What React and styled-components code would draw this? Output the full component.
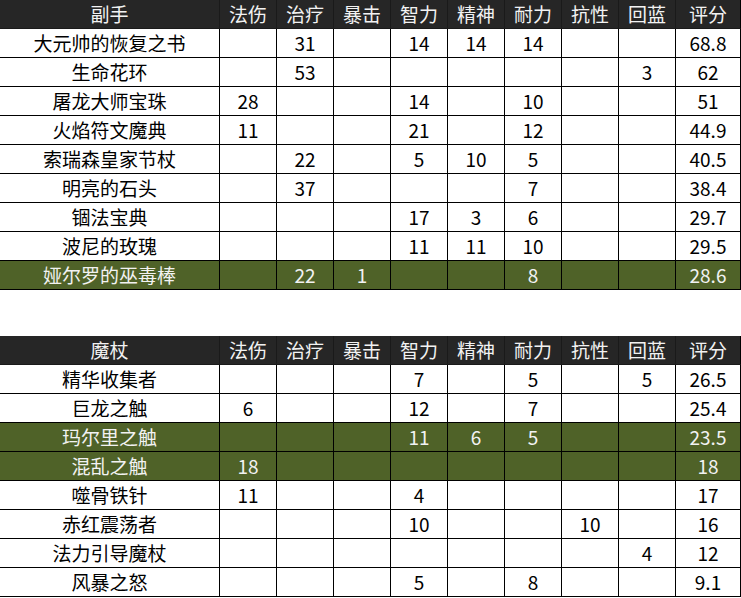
import React from "react";
import styled, { createGlobalStyle } from "styled-components";

const Global = createGlobalStyle`
  html, body { margin: 0; padding: 0; background: #ffffff; }
  body { font-family: "Noto Sans CJK SC", "Noto Sans", sans-serif; }
`;

const Page = styled.div`
  width: 741px;
  display: flex;
  flex-direction: column;
  gap: 46px;
`;

const Grid = styled.div`
  display: grid;
  grid-template-columns: 220px repeat(8, 57px) 65px;
  grid-auto-rows: 29px;
`;

const Cell = styled.div`
  box-sizing: border-box;
  border-right: 1px solid #000;
  border-bottom: 1px solid #000;
  display: flex;
  align-items: center;
  justify-content: center;
  font-size: 19px;
  line-height: 28px;
  white-space: nowrap;
  overflow: hidden;
  color: ${(p) => (p.$variant === "head" || p.$variant === "hl" ? "#f2f2f2" : "#000")};
  background: ${(p) =>
    p.$variant === "head" ? "#262626" : p.$variant === "hl" ? "#4f6228" : "#ffffff"};
  ${(p) => (p.$variant === "head" ? "border-color: #1a1a1a;" : "")}
  ${(p) => (p.$last && p.$variant === "head" ? "border-right-color: #000;" : "")}
`;

const cols = ["法伤", "治疗", "暴击", "智力", "精神", "耐力", "抗性", "回蓝", "评分"];

const offhand = [
  ["大元帅的恢复之书", "", "31", "", "14", "14", "14", "", "", "68.8"],
  ["生命花环", "", "53", "", "", "", "", "", "3", "62"],
  ["屠龙大师宝珠", "28", "", "", "14", "", "10", "", "", "51"],
  ["火焰符文魔典", "11", "", "", "21", "", "12", "", "", "44.9"],
  ["索瑞森皇家节杖", "", "22", "", "5", "10", "5", "", "", "40.5"],
  ["明亮的石头", "", "37", "", "", "", "7", "", "", "38.4"],
  ["锢法宝典", "", "", "", "17", "3", "6", "", "", "29.7"],
  ["波尼的玫瑰", "", "", "", "11", "11", "10", "", "", "29.5"],
  ["娅尔罗的巫毒棒", "", "22", "1", "", "", "8", "", "", "28.6", true],
];

const wands = [
  ["精华收集者", "", "", "", "7", "", "5", "", "5", "26.5"],
  ["巨龙之触", "6", "", "", "12", "", "7", "", "", "25.4"],
  ["玛尔里之触", "", "", "", "11", "6", "5", "", "", "23.5", true],
  ["混乱之触", "18", "", "", "", "", "", "", "", "18", true],
  ["噬骨铁针", "11", "", "", "4", "", "", "", "", "17"],
  ["赤红震荡者", "", "", "", "10", "", "", "10", "", "16"],
  ["法力引导魔杖", "", "", "", "", "", "", "", "4", "12"],
  ["风暴之怒", "", "", "", "5", "", "8", "", "", "9.1"],
];

function StatTable({ title, rows }) {
  const headers = [title, ...cols];
  return (
    <Grid>
      {headers.map((h, i) => (
        <Cell key={"h" + i} $variant="head" $last={i === headers.length - 1}>
          {h}
        </Cell>
      ))}
      {rows.map((r, ri) => {
        const hl = r[10] === true;
        return r.slice(0, 10).map((v, ci) => (
          <Cell key={ri + "-" + ci} $variant={hl ? "hl" : "body"}>
            {v}
          </Cell>
        ));
      })}
    </Grid>
  );
}

export default function App() {
  return (
    <>
      <Global />
      <Page>
        <StatTable title="副手" rows={offhand} />
        <StatTable title="魔杖" rows={wands} />
      </Page>
    </>
  );
}
